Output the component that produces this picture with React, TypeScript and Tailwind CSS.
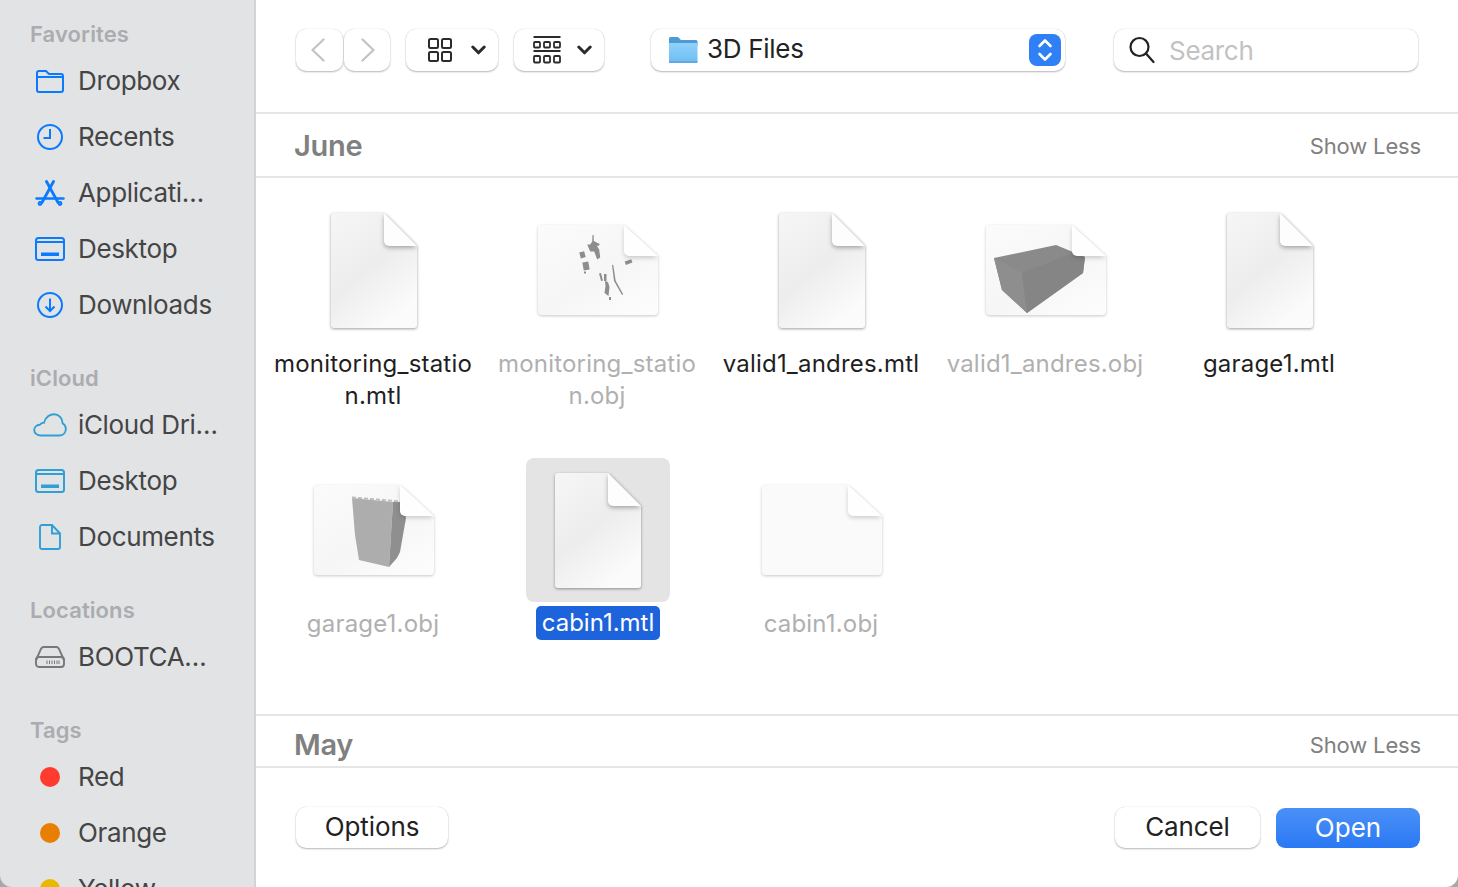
import { ReactNode } from "react"

const blue = "#0a7aff"
const cyan = "#2f9fd6"

function FolderIcon() {
  return (
    <svg width="30" height="24" viewBox="0 0 30 24" fill="none" stroke={blue} strokeWidth="2">
      <path d="M2 6V4a2 2 0 0 1 2-2h7l3 3h12a2 2 0 0 1 2 2v14a2 2 0 0 1-2 2H4a2 2 0 0 1-2-2z" />
      <path d="M2 8h26" />
    </svg>
  )
}

function ClockIcon() {
  return (
    <svg width="28" height="28" viewBox="0 0 28 28" fill="none" stroke={blue} strokeWidth="2">
      <circle cx="14" cy="14" r="12" />
      <path d="M14 6v9H7.500" />
    </svg>
  )
}

function AppsIcon() {
  return (
    <svg width="30" height="26" viewBox="0 0 30 26" fill="none" stroke={blue} strokeWidth="2.800" strokeLinecap="round">
      <path d="M11.500 1.500 23 22.500" />
      <path d="M18.500 1.500 7 22.500" />
      <path d="M1.500 18.500h27" strokeWidth="2.400" />
      <circle cx="5" cy="23.500" r="1" />
      <circle cx="25" cy="23.500" r="1" />
    </svg>
  )
}

function DesktopIcon({ color }: { color: string }) {
  return (
    <svg width="30" height="24" viewBox="0 0 30 24" fill="none" stroke={color} strokeWidth="2">
      <rect x="1" y="1" width="28" height="22" rx="2.500" />
      <path d="M1 5h28" />
      <rect x="6" y="15.500" width="18" height="3.500" fill={color} stroke="none" />
    </svg>
  )
}

function DownloadIcon() {
  return (
    <svg width="28" height="28" viewBox="0 0 28 28" fill="none" stroke={blue} strokeWidth="2">
      <circle cx="14" cy="14" r="12" />
      <path d="M14 7.500v12.500M9.500 15.500 14 20l4.500-4.500" />
    </svg>
  )
}

function CloudIcon() {
  return (
    <svg width="34" height="24" viewBox="0 0 34 24" fill="none" stroke={cyan} strokeWidth="1.900">
      <path d="M8 22.500C4 22.500 1.200 20 1.200 17c0-3 2.500-5 5.500-5.200C8 10.500 9.500 9.500 11 9.700 12.500 4 17 1.200 21 1.200c5 0 8.500 4 8.700 9.300 2.300 1.200 3.300 3.400 3.100 6-.2 3.500-3 6-6.500 6z" />
    </svg>
  )
}

function DocIcon() {
  return (
    <svg width="22" height="26" viewBox="0 0 22 26" fill="none" stroke={cyan} strokeWidth="1.900">
      <path d="M3 1h10l8 8.500V23a2 2 0 0 1-2 2H3a2 2 0 0 1-2-2V3a2 2 0 0 1 2-2z" />
      <path d="M13 1v8.500h8" />
    </svg>
  )
}

function DriveIcon() {
  return (
    <svg width="30" height="22" viewBox="0 0 30 22" fill="none" stroke="#77787a" strokeWidth="1.900">
      <path d="M1 14 6 3a3 3 0 0 1 2.500-2h13a3 3 0 0 1 2.500 2l5 11" />
      <rect x="1" y="11" width="28" height="10" rx="3" />
      <path d="M12 14.500v3.500M14.500 14.500v3.500M17 14.500v3.500M19.500 14.500v3.500M22 14.500v3.500M24 14.500v3.500" strokeWidth="1" />
    </svg>
  )
}

function Dot({ color }: { color: string }) {
  return <svg width="20" height="20" viewBox="0 0 20 20"><circle cx="10" cy="10" r="10" fill={color} /></svg>
}

function SideRow({ icon, label }: { icon: ReactNode; label: string }) {
  return (
    <div className="flex h-14 shrink-0 items-center gap-2">
      <div className="flex w-10 justify-center">{icon}</div>
      <span className="whitespace-nowrap pb-[2px] text-[26px] tracking-[-0.35px] text-[#454545]">{label}</span>
    </div>
  )
}

function SideHeader({ children, className }: { children: string; className: string }) {
  return <div className={"h-8 text-[22px] font-semibold leading-8 tracking-[0.1px] text-[#aaacaf] " + className}>{children}</div>
}

function Sidebar() {
  return (
    <aside className="flex w-[256px] shrink-0 flex-col overflow-hidden rounded-bl-[12px] border-r-2 border-[#d3d3d3] bg-[#e2e3e5] pl-[30px] pt-[18px]">
      <SideHeader className="mb-[3px]">Favorites</SideHeader>
      <SideRow icon={<FolderIcon />} label="Dropbox" />
      <SideRow icon={<ClockIcon />} label="Recents" />
      <SideRow icon={<AppsIcon />} label="Applicati…" />
      <SideRow icon={<DesktopIcon color={blue} />} label="Desktop" />
      <SideRow icon={<DownloadIcon />} label="Downloads" />
      <SideHeader className="mb-[3px] mt-[29px]">iCloud</SideHeader>
      <SideRow icon={<CloudIcon />} label="iCloud Dri…" />
      <SideRow icon={<DesktopIcon color={cyan} />} label="Desktop" />
      <SideRow icon={<DocIcon />} label="Documents" />
      <SideHeader className="mb-[3px] mt-[29px]">Locations</SideHeader>
      <SideRow icon={<DriveIcon />} label="BOOTCA…" />
      <SideHeader className="mb-[3px] mt-[29px]">Tags</SideHeader>
      <SideRow icon={<Dot color="#ff3b30" />} label="Red" />
      <SideRow icon={<Dot color="#e97f00" />} label="Orange" />
      <SideRow icon={<Dot color="#e9b900" />} label="Yellow" />
    </aside>
  )
}

const raised = "flex h-[42px] items-center rounded-[10px] bg-white shadow-[0_1px_2px_rgba(0,0,0,0.28),0_0_1px_rgba(0,0,0,0.18)]"

function NavChevron({ back }: { back?: boolean }) {
  return (
    <svg width="14" height="24" viewBox="0 0 14 24" fill="none" stroke="#c2c2c2" strokeWidth="2.200" strokeLinecap="round" strokeLinejoin="round">
      <path d={back ? "M12.500 1.500 1.500 12l11 10.500" : "M1.500 1.500 12.500 12l-11 10.500"} />
    </svg>
  )
}

function DropChevron({ className }: { className: string }) {
  return (
    <svg width="15" height="10" viewBox="0 0 15 10" fill="none" stroke="#2b2b2b" strokeWidth="3" strokeLinecap="round" strokeLinejoin="round" className={className}>
      <path d="M1.800 2 7.500 7.800 13.200 2" />
    </svg>
  )
}

function GridIcon() {
  return (
    <svg width="24" height="24" viewBox="0 0 24 24" fill="none" stroke="#2b2b2b" strokeWidth="2">
      <rect x="1" y="1" width="9" height="9" rx="1.500" />
      <rect x="14" y="1" width="9" height="9" rx="1.500" />
      <rect x="1" y="14" width="9" height="9" rx="1.500" />
      <rect x="14" y="14" width="9" height="9" rx="1.500" />
    </svg>
  )
}

function GalleryIcon() {
  return (
    <svg width="28" height="28" viewBox="0 0 28 28" fill="none" stroke="#2b2b2b" strokeWidth="1.800">
      <path d="M0.500 1h27M0.500 15h27" />
      <rect x="1" y="6" width="6" height="5.500" rx="1" />
      <rect x="11" y="6" width="6" height="5.500" rx="1" />
      <rect x="21" y="6" width="6" height="5.500" rx="1" />
      <rect x="1" y="20" width="6" height="6.500" rx="1" />
      <rect x="11" y="20" width="6" height="6.500" rx="1" />
      <rect x="21" y="20" width="6" height="6.500" rx="1" />
    </svg>
  )
}

function BlueFolder() {
  return (
    <svg width="30" height="28" viewBox="0 0 30 28">
      <defs>
        <linearGradient id="folderBody" x1="0" y1="0" x2="0" y2="1">
          <stop offset="0" stopColor="#8fd2fb" />
          <stop offset="1" stopColor="#6ebcf1" />
        </linearGradient>
      </defs>
      <path d="M1 2.500A1.500 1.500 0 0 1 2.500 1h7.500l3 3h15a1.500 1.500 0 0 1 1.500 1.500V10H1z" fill="#4e9ad5" />
      <path d="M1 7h28.500v18.500a1.500 1.500 0 0 1-1.500 1.500H2.500A1.500 1.500 0 0 1 1 25.500z" fill="url(#folderBody)" />
      <path d="M1 26h28.500" stroke="#5aa3da" strokeWidth="1.500" />
    </svg>
  )
}

function SearchGlass() {
  return (
    <svg width="26" height="28" viewBox="0 0 26 28" fill="none" stroke="#222222" strokeWidth="2.200" strokeLinecap="round">
      <circle cx="10.500" cy="11" r="9" />
      <path d="M17 17.500 24.500 26" />
    </svg>
  )
}

function Toolbar() {
  return (
    <div className="flex h-[114px] shrink-0 items-start border-b-2 border-[#e5e5e5] pl-[40px] pt-[29px]">
      <div className={raised + " w-[47px] justify-center pr-[4px]"}>
        <NavChevron back />
      </div>
      <div className={raised + " ml-px w-[46px] justify-center pl-[1px]"}>
        <NavChevron />
      </div>
      <div className={raised + " ml-[16px] w-[92px] pl-[22px]"}>
        <GridIcon />
        <DropChevron className="ml-[19px]" />
      </div>
      <div className={raised + " ml-[16px] w-[90px] pl-[19px]"}>
        <GalleryIcon />
        <DropChevron className="ml-[16px]" />
      </div>
      <div className={raised + " ml-[47px] w-[414px] pl-[17px] pr-[4px]"}>
        <BlueFolder />
        <span className="ml-[9px] flex-1 pb-[3px] text-[26px] tracking-[-0.3px] text-[#222222]">3D Files</span>
        <div className="flex h-[32px] w-[32px] items-center justify-center rounded-[8px] bg-[#2f7ff5]">
          <svg width="16" height="26" viewBox="0 0 16 26" fill="none" stroke="white" strokeWidth="2.600" strokeLinecap="round" strokeLinejoin="round">
            <path d="M2.500 9 8 3.500 13.500 9M2.500 17 8 22.500 13.500 17" />
          </svg>
        </div>
      </div>
      <div className={raised + " ml-[49px] w-[304px] pl-[15px]"}>
        <SearchGlass />
        <span className="ml-[14px] text-[26px] tracking-[-0.3px] text-[#c2c2c2]">Search</span>
      </div>
    </div>
  )
}

function SectionHeader({ title, className }: { title: string; className: string }) {
  return (
    <div className={"flex shrink-0 items-center justify-between border-b-2 border-[#e5e5e5] pl-[38px] pr-[37px] " + className}>
      <span className="text-[29px] font-semibold tracking-[-0.3px] text-[#808080]">{title}</span>
      <span className="pt-[1px] text-[22px] tracking-[-0.15px] text-[#808080]">Show Less</span>
    </div>
  )
}

function PageDoc({ selected }: { selected?: boolean }) {
  const grad = selected ? "docGradSel" : "docGrad"
  return (
    <svg width="92" height="120" viewBox="-3 -3 92 120" className="drop-shadow-[0_1.500px_1.500px_rgba(0,0,0,0.38)]">
      <defs>
        <linearGradient id={grad} x1="0" y1="0" x2="0.6" y2="1">
          <stop offset="0" stopColor="#f6f6f6" />
          <stop offset="0.55" stopColor="#ededed" />
          <stop offset="1" stopColor="#fbfbfb" />
        </linearGradient>
      </defs>
      <path d="M3 0h50l33 33v79a3 3 0 0 1-3 3H3a3 3 0 0 1-3-3V3a3 3 0 0 1 3-3z" fill={`url(#${grad})`} />
      <path d="M53 0v28a5 5 0 0 0 5 5h28z" fill="#fdfdfd" className="drop-shadow-[0_2px_2px_rgba(0,0,0,0.3)]" />
    </svg>
  )
}

function Thumb({ art, blank }: { art?: ReactNode; blank?: boolean }) {
  return (
    <svg width="126" height="96" viewBox="-3 -3 126 96" className="drop-shadow-[0_1px_1.500px_rgba(0,0,0,0.22)]">
      <defs>
        <linearGradient id="thumbGrad" x1="0" y1="0" x2="0.8" y2="1">
          <stop offset="0" stopColor="#fbfbfb" />
          <stop offset="0.6" stopColor="#f6f6f6" />
          <stop offset="1" stopColor="#fcfcfc" />
        </linearGradient>
      </defs>
      <path d="M4 0h82l34 31v55a4 4 0 0 1-4 4H4a4 4 0 0 1-4-4V4a4 4 0 0 1 4-4z" fill={blank ? "#fafafa" : "url(#thumbGrad)"} />
      {art}
      <path d="M86 0v26a5 5 0 0 0 5 5h29z" fill="#fefefe" className="drop-shadow-[0_2px_2px_rgba(0,0,0,0.18)]" />
    </svg>
  )
}

const stationArt = (
  <g fill="#8d8d8d">
    <path d="M54.500 10h1.200v6l6 3-1 2-2-.500 2.500 4 1 8-3 2-3-8-4 0-3-7 3 0 2-3z" />
    <rect x="42" y="27" width="5" height="6" transform="rotate(-15 44 30)" />
    <rect x="45" y="37" width="6" height="8" transform="rotate(-10 48 41)" />
    <rect x="46" y="46.500" width="2" height="2" />
    <rect x="62" y="48" width="2" height="8" transform="rotate(-15 63 52)" />
    <rect x="66" y="49" width="2.500" height="7" />
    <path d="M67 56l3 1 1.500 5-1 9-4-3 1-7z" />
    <path d="M74 40l1.200-.3 2.500 16 7.500 13.500-1.200.8-8-14z" />
    <rect x="87" y="35.500" width="7" height="3.500" transform="rotate(-20 90 37)" />
    <rect x="71" y="72" width="2" height="3" />
  </g>
)

const boxArt = (
  <g>
    <path d="M8 33 70 20 99 32 97 48 41 88 16 65z" fill="#8a8a8a" />
    <path d="M8 33 36 48 41 88 16 65z" fill="#8e8e8e" />
    <path d="M36 48 87 28 99 32 97 48 41 88z" fill="#858585" />
  </g>
)

const towerArt = (
  <g>
    <path d="M38 13 79 17 75 82 45 75 41 50z" fill="#adadad" />
    <path d="M79 17 88 17 92 33 86 67 83 73 75 82z" fill="#8f8f8f" />
    <path d="M38 12.500 86 16.500" stroke="#bdbdbd" strokeWidth="2" strokeDasharray="4 2" />
  </g>
)

function FileItem({ name, icon, dim, selected }: { name: string[]; icon: ReactNode; dim?: boolean; selected?: boolean }) {
  return (
    <div className="flex h-[260px] flex-col items-center">
      <div className={"flex h-[144px] w-[144px] shrink-0 items-center justify-center rounded-[8px] " + (selected ? "bg-[#e4e4e4]" : "")}>
        {icon}
      </div>
      {selected ? (
        <div className="mt-[4px] rounded-[5px] bg-[#1d63dc] px-[6px] text-[24px] leading-[34px] text-white">{name[0]}</div>
      ) : (
        <div className={"mt-[6px] pr-[2px] text-center text-[24px] leading-[32px] tracking-[0.2px] " + (dim ? "text-[#b0b0b0]" : "text-[#1f1f1f]")}>
          {name.map((line) => <div key={line} className="whitespace-nowrap">{line}</div>)}
        </div>
      )}
    </div>
  )
}

function FileGrid() {
  return (
    <div className="grid h-[536px] shrink-0 grid-cols-[repeat(5,224px)] content-start pl-[6px] pt-[20px]">
      <FileItem name={["monitoring_statio", "n.mtl"]} icon={<PageDoc />} />
      <FileItem name={["monitoring_statio", "n.obj"]} icon={<Thumb art={stationArt} />} dim />
      <FileItem name={["valid1_andres.mtl"]} icon={<PageDoc />} />
      <FileItem name={["valid1_andres.obj"]} icon={<Thumb art={boxArt} />} dim />
      <FileItem name={["garage1.mtl"]} icon={<PageDoc />} />
      <FileItem name={["garage1.obj"]} icon={<Thumb art={towerArt} />} dim />
      <FileItem name={["cabin1.mtl"]} icon={<PageDoc selected />} selected />
      <FileItem name={["cabin1.obj"]} icon={<Thumb blank />} dim />
    </div>
  )
}

function Footer() {
  const btn = raised + " !h-[41px] justify-center pb-[2px] text-[26px] tracking-[-0.1px] text-[#222222]"
  return (
    <div className="flex flex-1 items-start justify-between pl-[40px] pr-[38px] pt-[39px]">
      <div className={btn + " w-[152px]"}>Options</div>
      <div className="flex gap-[16px]">
        <div className={btn + " w-[145px]"}>Cancel</div>
        <div className="mt-px flex h-[40px] w-[144px] items-center justify-center rounded-[9px] bg-gradient-to-b from-[#4a90f7] to-[#2a78f4] pb-[2px] text-[26px] text-white">Open</div>
      </div>
    </div>
  )
}

export default function App() {
  return (
    <div className="h-[887px] w-[1458px] overflow-hidden bg-[#a8a8a8] font-['Inter',sans-serif]">
      <div className="flex h-full">
        <Sidebar />
        <main className="flex min-w-0 flex-1 flex-col rounded-br-[12px] bg-white">
          <Toolbar />
          <SectionHeader title="June" className="h-[64px] pt-[2px]" />
          <FileGrid />
          <SectionHeader title="May" className="h-[54px] border-t-2 pt-[8px]" />
          <Footer />
        </main>
      </div>
    </div>
  )
}
